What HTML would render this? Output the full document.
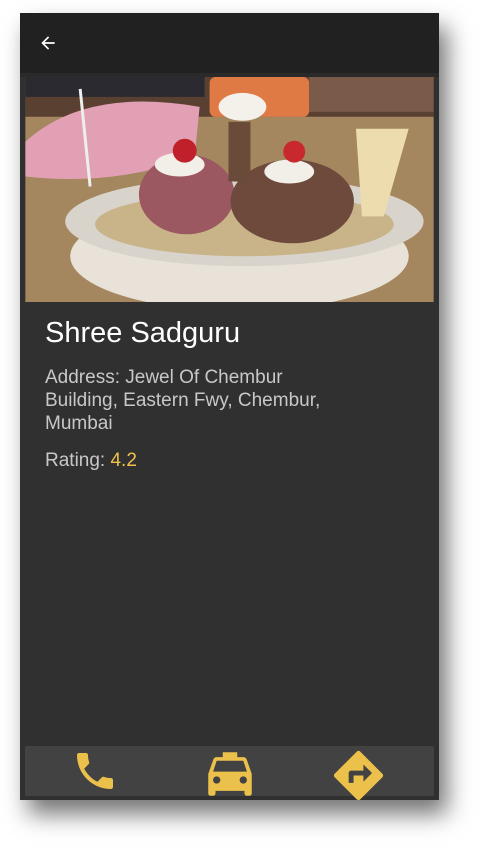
<!DOCTYPE html>
<html><head><meta charset="utf-8"><style>
html,body{margin:0;padding:0;background:#fff;width:486px;height:846px;overflow:hidden;font-family:"Liberation Sans",Roboto,sans-serif}
.phone{position:absolute;left:20px;top:13px;width:419px;height:787px;background:#303030;box-shadow:8px 14px 22px rgba(0,0,0,.55)}
.top{position:absolute;left:0;top:0;width:419px;height:60px;background:#212121}
.line{position:absolute;left:0;top:60px;width:419px;height:4px;background:#2a2a2a}
.img{position:absolute;left:5px;top:64px;width:409px;height:225px;overflow:hidden}
.t{position:absolute;left:25px;color:#fff}
.bb{position:absolute;left:5px;top:733px;width:409px;height:50px;background:#424242;border-radius:2px}
svg.i{position:absolute}
</style></head><body>
<div class="phone">
<div class="top"></div>
<svg class="i" style="left:18px;top:20px" width="20" height="20" viewBox="0 0 24 24"><path fill="#fff" d="M20 11H7.83l5.59-5.59L12 4l-8 8 8 8 1.41-1.41L7.83 13H20v-2z"/></svg>
<div class="line"></div>
<div class="img">
<svg width="409" height="225" viewBox="0 0 410 226">
<rect width="410" height="226" fill="#8a6e4c"/>
<rect width="410" height="40" fill="#5a4030"/>
<rect x="0" y="0" width="180" height="20" fill="#2a2a30"/>
<rect x="185" y="0" width="100" height="40" rx="6" fill="#e07a45"/>
<rect x="285" y="0" width="125" height="35" fill="#7a5a48"/>
<rect x="0" y="40" width="410" height="186" fill="#a4875f"/>
<ellipse cx="215" cy="180" rx="170" ry="55" fill="#e8e2d8"/>
<ellipse cx="220" cy="145" rx="180" ry="45" fill="#d8d4cc"/>
<ellipse cx="220" cy="148" rx="150" ry="32" fill="#c9b48a"/>
<path d="M0 65 Q60 10 175 30 L170 80 Q90 110 0 100Z" fill="#e2a0b4"/>
<line x1="55" y1="12" x2="65" y2="110" stroke="#eee" stroke-width="3"/>
<ellipse cx="162" cy="118" rx="48" ry="40" fill="#9b5860"/>
<ellipse cx="268" cy="125" rx="62" ry="42" fill="#6e4a3c"/>
<ellipse cx="155" cy="88" rx="25" ry="12" fill="#f2eee8"/>
<circle cx="160" cy="74" r="12" fill="#c0202a"/>
<ellipse cx="265" cy="95" rx="25" ry="12" fill="#f2eee8"/>
<circle cx="270" cy="75" r="11" fill="#c8282e"/>
<rect x="204" y="45" width="22" height="60" fill="#6a4a38"/>
<ellipse cx="218" cy="30" rx="24" ry="14" fill="#f4f0ea"/>
<path d="M332 52 L385 52 L360 140 L338 140Z" fill="#ecdcae"/>
</svg>
</div>
<div class="t" style="top:304px;font-size:29px">Shree Sadguru</div>
<div class="t" style="top:353px;font-size:19px;line-height:23px;color:#c8c8c8;width:295px">Address: Jewel Of Chembur Building, Eastern Fwy, Chembur, Mumbai</div>
<div class="t" style="top:436px;font-size:19px;line-height:23px;color:#c8c8c8">Rating: <span style="color:#f0c14b">4.2</span></div>
<div class="bb"></div>
<svg class="i" style="left:51px;top:734px" width="48" height="48" viewBox="0 0 24 24"><path fill="#ebc14c" d="M6.62 10.79c1.44 2.83 3.76 5.14 6.59 6.59l2.2-2.2c.27-.27.67-.36 1.02-.24 1.12.37 2.33.57 3.57.57.55 0 1 .45 1 1V20c0 .55-.45 1-1 1-9.39 0-17-7.61-17-17 0-.55.45-1 1-1h3.5c.55 0 1 .45 1 1 0 1.25.2 2.45.57 3.57.11.35.03.74-.25 1.02l-2.2 2.2z"/></svg>
<svg class="i" style="left:181px;top:732px" width="58" height="58" viewBox="0 0 24 24"><path fill="#ebc14c" d="M18.92 6.01C18.72 5.42 18.16 5 17.5 5H15V3H9v2H6.5c-.66 0-1.21.42-1.42 1.01L3 12v8c0 .55.45 1 1 1h1c.55 0 1-.45 1-1v-1h12v1c0 .55.45 1 1 1h1c.55 0 1-.45 1-1v-8l-2.08-5.99zM6.5 16c-.83 0-1.5-.67-1.5-1.5S5.67 13 6.5 13s1.5.67 1.5 1.5S7.33 16 6.5 16zm11 0c-.83 0-1.5-.67-1.5-1.5s.67-1.5 1.5-1.5 1.5.67 1.5 1.5-.67 1.5-1.5 1.5zM5 11l1.5-4.5h11L19 11H5z"/></svg>
<svg class="i" style="left:309px;top:733px" width="59" height="59" viewBox="0 0 24 24"><path fill="#ebc14c" d="M21.71 11.29l-9-9c-.39-.39-1.02-.39-1.41 0l-9 9c-.39.39-.39 1.02 0 1.41l9 9c.39.39 1.02.39 1.41 0l9-9c.39-.38.39-1.01 0-1.41zM14 14.5V12h-4v3H8v-4c0-.55.45-1 1-1h5V7.5l3.5 3.5-3.5 3.5z"/></svg>
</div>
</body></html>
